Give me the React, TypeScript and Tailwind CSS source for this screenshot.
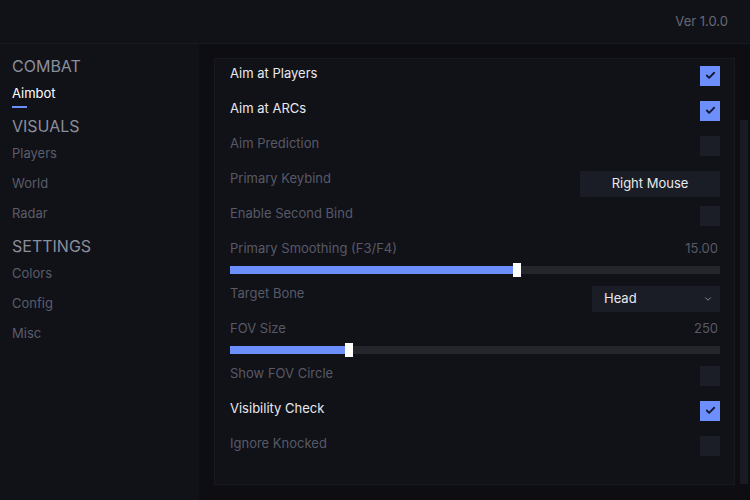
import { Check, ChevronDown } from "lucide-react";

type Row =
  | { kind: "check"; label: string; on: boolean }
  | { kind: "button"; label: string; value: string }
  | { kind: "select"; label: string; value: string }
  | { kind: "slider"; label: string; value: string; pct: number };

const rows: Row[] = [
  { kind: "check", label: "Aim at Players", on: true },
  { kind: "check", label: "Aim at ARCs", on: true },
  { kind: "check", label: "Aim Prediction", on: false },
  { kind: "button", label: "Primary Keybind", value: "Right Mouse" },
  { kind: "check", label: "Enable Second Bind", on: false },
  { kind: "slider", label: "Primary Smoothing (F3/F4)", value: "15.00", pct: 58.6 },
  { kind: "select", label: "Target Bone", value: "Head" },
  { kind: "slider", label: "FOV Size", value: "250", pct: 24.3 },
  { kind: "check", label: "Show FOV Circle", on: false },
  { kind: "check", label: "Visibility Check", on: true },
  { kind: "check", label: "Ignore Knocked", on: false },
];

const nav = [
  { title: "COMBAT", items: ["Aimbot"] },
  { title: "VISUALS", items: ["Players", "World", "Radar"] },
  { title: "SETTINGS", items: ["Colors", "Config", "Misc"] },
];

function Label({ text, active }: { text: string; active: boolean }) {
  return (
    <span className={active ? "text-[13px] text-[#e8e9ee]" : "text-[13px] text-[#575a66]"}>
      {text}
    </span>
  );
}

function SettingRow({ row }: { row: Row }) {
  if (row.kind === "slider") {
    return (
      <div className="flex flex-col">
        <div className="flex h-[30px] items-center justify-between">
          <Label text={row.label} active={false} />
          <span className="mr-[2px] text-[13px] text-[#575a66]">{row.value}</span>
        </div>
        <div className="flex h-[10px] items-end">
          <div className="relative h-[8px] w-full bg-[#25262c]">
            <div className="h-full bg-[#6d8ffc]" style={{ width: `${row.pct}%` }} />
            <div
              className="absolute top-[-3px] h-[14px] w-[8px] -translate-x-1/2 bg-white"
              style={{ left: `${row.pct}%` }}
            />
          </div>
        </div>
      </div>
    );
  }

  if (row.kind === "button") {
    return (
      <div className="flex h-[30px] items-center justify-between">
        <Label text={row.label} active={false} />
        <div className="mt-[10px] flex h-[26px] w-[140px] items-center justify-center bg-[#1b1d26] text-[13px] text-[#e8e9ee]">
          {row.value}
        </div>
      </div>
    );
  }

  if (row.kind === "select") {
    return (
      <div className="flex h-[30px] items-center justify-between">
        <Label text={row.label} active={false} />
        <div className="mt-[10px] flex h-[26px] w-[128px] items-center justify-between bg-[#1b1d26] pl-[12px] pr-[7px] text-[13px] text-[#e8e9ee]">
          {row.value}
          <ChevronDown size={10} strokeWidth={2} className="text-[#9a9daa]" />
        </div>
      </div>
    );
  }

  return (
    <div className="flex h-[30px] items-center justify-between">
      <Label text={row.label} active={row.on} />
      <div
        className={
          row.on
            ? "mt-[3px] flex h-[20px] w-[20px] items-center justify-center bg-[#6d8ffc]"
            : "mt-[3px] h-[20px] w-[20px] bg-[#1c1e27]"
        }
      >
        {row.on && <Check size={11} strokeWidth={4} className="text-[#141833]" />}
      </div>
    </div>
  );
}

export default function App() {
  return (
    <div
      className="flex h-[500px] w-[750px] flex-col overflow-hidden bg-[#111118]"
      style={{ fontFamily: "Inter, 'Noto Sans', sans-serif" }}
    >
      {/* header */}
      <div className="flex h-[44px] shrink-0 items-center justify-end border-b border-[#191a21] pr-[22px]">
        <span className="text-[13px] text-[#676a76]">Ver 1.0.0</span>
      </div>

      <div className="flex flex-1">
        {/* sidebar */}
        <div className="flex w-[199px] flex-col gap-[5px] pl-[12px] pt-[10px]">
          {nav.map((group) => (
            <div key={group.title} className="flex flex-col">
              <div className="flex h-[24px] items-center text-[16px] text-[#8b8e9b]">
                {group.title}
              </div>
              <div className="mt-[1px] flex flex-col">
                {group.items.map((item) => {
                  const active = item === "Aimbot";
                  return (
                    <div key={item} className="relative flex h-[30px] items-center">
                      <span className={active ? "text-[13px] text-white" : "text-[13px] text-[#5a5d69]"}>
                        {item}
                      </span>
                      {active && (
                        <div className="absolute bottom-[1px] left-0 h-[2px] w-[15px] bg-[#6d8ffc]" />
                      )}
                    </div>
                  );
                })}
              </div>
            </div>
          ))}
        </div>

        {/* main */}
        <div className="flex flex-1 bg-[#0d0d12] pl-[15px] pt-[14px]">
          <div className="flex h-[427px] w-[521px] flex-col gap-[5px] border border-[#181920] bg-[#111118] pl-[15px] pr-[14px]">
            {rows.map((row) => (
              <SettingRow key={row.label} row={row} />
            ))}
          </div>
          <div className="ml-[5px] flex w-[8px] flex-col pt-[62px]">
            <div className="h-[364px] w-full bg-[#191a22]" />
          </div>
        </div>
      </div>
    </div>
  );
}
